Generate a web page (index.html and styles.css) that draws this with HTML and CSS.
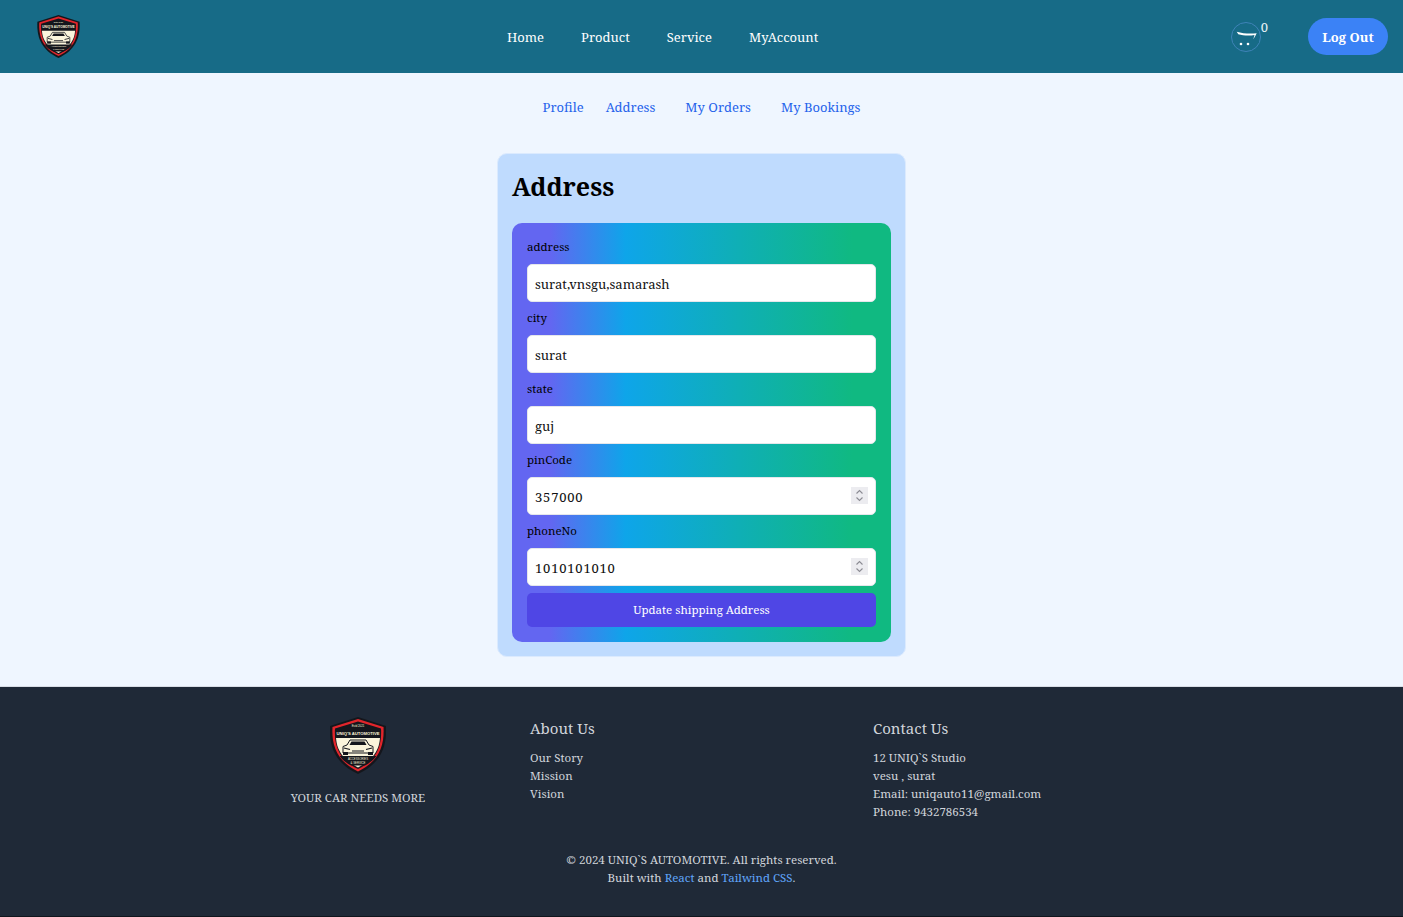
FILE: index.html
```html
<!DOCTYPE html>
<html lang="en">
<head>
<meta charset="UTF-8">
<meta name="viewport" content="width=device-width, initial-scale=1.0">
<title>UNIQ`S AUTOMOTIVE - Address</title>
<link rel="stylesheet" href="styles.css">
</head>
<body>

<svg class="svg-defs" width="0" height="0" aria-hidden="true">
    <defs>
        <symbol id="logo" viewBox="0 0 56 57">
            <path d="M28 0 L56 9 C57 28 52 46 28 57 C4 46 -1 28 0 9 Z" fill="#14161c"/>
            <path d="M28 2 L53.500 10 C54.500 28 49.500 44 28 54.500 C6.500 44 1.500 28 2.500 10 Z" fill="#e2252b"/>
            <path d="M28 4.500 L51 11.500 C52 28 47.500 42.500 28 52 C8.500 42.500 4 28 5 11.500 Z" fill="#14161c"/>
            <path d="M6 21 H50 C49 33 44 42 28 50.500 C12 42 7 33 6 21 Z" fill="#fbf5dc"/>
            <path d="M9.500 39 H46.500 C43.500 43 39 46.500 35 48.500 H21 C17 46.500 12.500 43 9.500 39 Z" fill="#14161c"/>
            <text class="logo-txt" x="28" y="10" font-size="2.800">Estd 2021</text>
            <text class="logo-txt logo-bold" x="28" y="17.500" font-size="4.200">UNIQ'S AUTOMOTIVE</text>
            <text class="logo-txt" x="28" y="43" font-size="2.800">ACCESSORIES</text>
            <text class="logo-txt" x="28" y="47" font-size="2.800">&amp; SERVICE</text>
            <path d="M20 23 H36 L39 28 L43 29.500 L43 36 H13 L13 29.500 L17 28 Z" fill="#fbf5dc" stroke="#14161c" stroke-width="1"/>
            <path d="M19.500 28 L21.500 24.500 H34.500 L36.500 28 Z" fill="#14161c"/>
            <path d="M14 31 L20 32.500 M42 31 L36 32.500 M22 34 H34" stroke="#14161c" stroke-width="1.100" fill="none"/>
            <rect x="13" y="35" width="5" height="3" fill="#14161c"/>
            <rect x="38" y="35" width="5" height="3" fill="#14161c"/>
        </symbol>
        <symbol id="spinner" viewBox="0 0 17 17">
            <rect width="17" height="17" fill="#ececf0"/>
            <path d="M5.500 6.500 L8.500 3.500 L11.500 6.500 M5.500 10.500 L8.500 13.500 L11.500 10.500" fill="none" stroke="#8b8b93" stroke-width="1.100"/>
        </symbol>
    </defs>
</svg>

<header class="navbar">
    <svg class="nav-logo"><use href="#logo"/></svg>
    <nav class="nav-links">
        <a href="#">Home</a>
        <a href="#">Product</a>
        <a href="#">Service</a>
        <a href="#">MyAccount</a>
    </nav>
    <div class="nav-right">
        <div class="cart">
            <svg class="cart-icon" viewBox="0 0 30 30">
                <circle cx="15" cy="15" r="14.500" fill="none" stroke="#3f83b8" stroke-width="1"/>
                <path d="M5.700 9.700 C12 11.500 19 12 25.700 11.200 C24.500 13.500 23.500 15.500 22.300 17.300 C23 15 23.300 14 23.500 13 C18 14 12 13.500 7.300 12.300 Z" fill="#fff"/>
                <circle cx="10" cy="22" r="1.300" fill="#fff"/>
                <circle cx="17" cy="22" r="1.300" fill="#fff"/>
            </svg>
            <span class="cart-count">0</span>
        </div>
        <button class="logout" type="button">Log Out</button>
    </div>
</header>

<main class="page">
    <ul class="sub-nav">
        <li class="tab-profile"><a href="#">Profile</a></li>
        <li class="tab-address"><a href="#">Address</a></li>
        <li class="tab-orders"><a href="#">My Orders</a></li>
        <li><a href="#">My Bookings</a></li>
    </ul>

    <section class="card">
        <h1>Address</h1>
        <form class="address-form">
            <label for="address">address</label>
            <input type="text" id="address" value="surat,vnsgu,samarash">
            <label for="city">city</label>
            <input type="text" id="city" value="surat">
            <label for="state">state</label>
            <input type="text" id="state" value="guj">
            <label for="pinCode">pinCode</label>
            <div class="number-field">
                <input type="number" id="pinCode" value="357000">
                <svg class="spinner"><use href="#spinner"/></svg>
            </div>
            <label for="phoneNo">phoneNo</label>
            <div class="number-field">
                <input type="number" id="phoneNo" value="1010101010">
                <svg class="spinner"><use href="#spinner"/></svg>
            </div>
            <button type="button">Update shipping Address</button>
        </form>
    </section>
</main>

<footer class="footer">
    <div class="footer-cols">
        <div class="footer-brand">
            <svg class="footer-logo"><use href="#logo"/></svg>
            <p>YOUR CAR NEEDS MORE</p>
        </div>
        <div class="footer-about">
            <h3>About Us</h3>
            <ul>
                <li>Our Story</li>
                <li>Mission</li>
                <li>Vision</li>
            </ul>
        </div>
        <div class="footer-contact">
            <h3>Contact Us</h3>
            <p>12 UNIQ`S Studio</p>
            <p>vesu , surat</p>
            <p>Email: uniqauto11@gmail.com</p>
            <p>Phone: 9432786534</p>
        </div>
    </div>
    <div class="footer-bottom">
        <p>© 2024 UNIQ`S AUTOMOTIVE. All rights reserved.</p>
        <p>Built with <a href="#">React</a> and <a href="#">Tailwind CSS</a>.</p>
    </div>
</footer>

</body>
</html>
```

FILE: styles.css
```css
* {
    box-sizing: border-box;
}
body {
    font-family: 'Noto Serif', 'DejaVu Serif', serif;
    background-color: #eff6ff;
    margin: 0;
    padding: 0;
    font-size: 13px;
    line-height: 18px;
}
a {
    text-decoration: none;
}
p, ul, h1, h3 {
    margin: 0;
    padding: 0;
}
ul {
    list-style: none;
}
.svg-defs {
    position: absolute;
}
.logo-txt {
    fill: #fbf5dc;
    text-anchor: middle;
    font-family: 'Liberation Sans', sans-serif;
}
.logo-bold {
    font-weight: 700;
}

.navbar {
    height: 73px;
    background-color: #176b87;
    display: flex;
    align-items: center;
    padding: 0 15px 0 37px;
    position: relative;
}
.nav-logo {
    width: 43px;
    height: 43px;
}
.nav-links {
    position: absolute;
    left: 507px;
    top: 28px;
    display: flex;
    gap: 37px;
}
.nav-links a {
    color: #fff;
}
.nav-right {
    margin-left: auto;
    display: flex;
    align-items: center;
    gap: 40px;
}
.cart {
    display: flex;
    align-items: flex-start;
    height: 30px;
}
.cart-icon {
    width: 30px;
    height: 30px;
}
.cart-count {
    color: #e5f0f5;
    margin-top: -4px;
}
.logout {
    width: 80px;
    height: 37px;
    border: none;
    border-radius: 19px;
    background-color: #3b82f6;
    color: #fff;
    font: 700 13px 'Noto Serif', 'DejaVu Serif', serif;
}

.page {
    height: 613px;
    padding-top: 25px;
    display: flex;
    flex-direction: column;
    align-items: center;
}
.sub-nav {
    display: flex;
    gap: 22px;
    height: 55px;
    line-height: 18px;
}
.sub-nav a {
    color: #2563eb;
}
.tab-address {
    margin-right: 8px;
}
.tab-orders {
    margin-right: 8px;
}

.card {
    width: 409px;
    height: 504px;
    background-color: #bfdbfe;
    border: 1px solid #dbeafe;
    border-radius: 10px;
    padding: 14px;
}
.card h1 {
    font-size: 25px;
    line-height: 36px;
    font-weight: 700;
    color: #000;
    margin-bottom: 19px;
}
.address-form {
    height: 419px;
    background-image: linear-gradient(to right, #6366f1 10%, #0ea5e9 30%, #10b981 90%);
    border-radius: 10px;
    padding: 15px;
    display: flex;
    flex-direction: column;
}
.address-form label {
    height: 26px;
    line-height: 18px;
    color: #000;
    font-size: 11.5px;
}
.address-form input {
    height: 38px;
    width: 100%;
    margin-bottom: 7px;
    border: 1px solid #e5e7eb;
    border-radius: 5px;
    padding: 1px 7px 0;
    background-color: #fff;
    color: #111;
    font: 13px 'Noto Serif', 'DejaVu Serif', serif;
    flex-shrink: 0;
}
.address-form input[type="number"] {
    letter-spacing: 0.8px;
    appearance: textfield;
}
.address-form input[type="number"]::-webkit-inner-spin-button {
    display: none;
}
.number-field {
    position: relative;
    height: 45px;
    flex-shrink: 0;
}
.spinner {
    position: absolute;
    top: 10px;
    right: 8px;
    width: 17px;
    height: 17px;
}
.address-form button {
    height: 34px;
    border: none;
    border-radius: 5px;
    padding: 0 0 1px;
    background-color: #4f46e5;
    color: #fff;
    font: 11.5px 'Noto Serif', 'DejaVu Serif', serif;
    flex-shrink: 0;
}

.footer {
    height: 231px;
    background-color: #1f2937;
    border-top: 1px solid #d8dde5;
    border-bottom: 1px solid #10151c;
    color: #d1d5db;
    font-size: 11.5px;
    padding-top: 29px;
}
.footer-cols {
    display: flex;
    height: 130px;
}
.footer-brand {
    width: 530px;
    padding-left: 290px;
    padding-top: 1px;
}
.footer-brand p {
    width: 136px;
    margin-top: 15px;
    text-align: center;
    white-space: nowrap;
}
.footer-logo {
    width: 56px;
    height: 57px;
    display: block;
    margin-left: 40px;
}
.footer-about {
    width: 343px;
}
.footer h3 {
    font-size: 15px;
    font-weight: 400;
    line-height: 24px;
    margin-bottom: 9px;
}
.footer-bottom {
    text-align: center;
    margin-top: 5px;
}
.footer-bottom a {
    color: #60a5fa;
}
```
